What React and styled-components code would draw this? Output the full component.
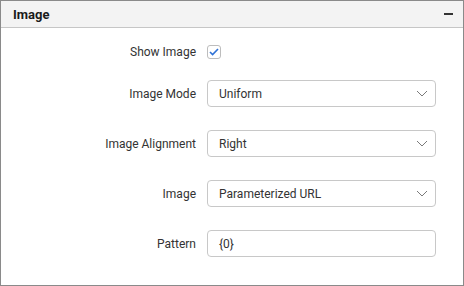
import React from "react";
import styled, { createGlobalStyle } from "styled-components";

const Global = createGlobalStyle`
  html, body { margin: 0; padding: 0; background: #fff; }
  * { box-sizing: border-box; }
`;

const rows = [
  { label: "Image Mode", value: "Uniform", select: true },
  { label: "Image Alignment", value: "Right", select: true },
  { label: "Image", value: "Parameterized URL", select: true },
  { label: "Pattern", value: "{0}", select: false },
];

const Chevron = () => (
  <svg width="12" height="7" viewBox="0 0 12 7">
    <path d="M1 1l5 5 5-5" fill="none" stroke="#7a7a7a" strokeWidth="1" />
  </svg>
);

const App = () => {
  return (
    <Panel>
      <Global />
      <Header>
        <Title>Image</Title>
        <Collapse />
      </Header>
      <Body>
        <Row $after={21}>
          <Label>Show Image</Label>
          <Check>
            <svg width="10" height="8" viewBox="0 0 10 8">
              <path d="M1 4l2.6 2.6L9 1" fill="none" stroke="#2f72d6" strokeWidth="1.6" />
            </svg>
          </Check>
        </Row>
        {rows.map((r) => (
          <Row key={r.label} $after={23}>
            <Label>{r.label}</Label>
            <Field>
              <span>{r.value}</span>
              {r.select && <Chevron />}
            </Field>
          </Row>
        ))}
      </Body>
    </Panel>
  );
};

const Panel = styled.div`
  width: 464px;
  height: 286px;
  border: 1px solid #8a8a8a;
  font-family: Roboto, "Liberation Sans", sans-serif;
  color: #333;
  background: #fff;
`;
const Header = styled.div`
  height: 27px;
  background: #f3f3f3;
  border-bottom: 1px solid #c6c6c6;
  display: flex;
  align-items: center;
  justify-content: space-between;
  padding: 0 10px 0 12px;
`;
const Title = styled.div`
  font-size: 13px;
  font-weight: 700;
  color: #1a1a1a;
`;
const Collapse = styled.div`
  width: 9px;
  height: 2px;
  background: #333;
`;
const Body = styled.div`
  padding-top: 17px;
  display: flex;
  flex-direction: column;
`;
const Row = styled.div`
  display: grid;
  grid-template-columns: 195px 229px;
  column-gap: 11px;
  align-items: center;
  margin-bottom: ${(p) => p.$after}px;
`;
const Label = styled.div`
  text-align: right;
  font-size: 12px;
  color: #333;
`;
const Check = styled.div`
  width: 14px;
  height: 14px;
  border: 1px solid #bdbdbd;
  border-radius: 3px;
  display: flex;
  align-items: center;
  justify-content: center;
`;
const Field = styled.div`
  height: 27px;
  border: 1px solid #c8c8c8;
  border-radius: 4px;
  display: flex;
  align-items: center;
  justify-content: space-between;
  padding: 0 7px 0 11px;
  font-size: 12px;
  color: #333;
`;

export default App;
